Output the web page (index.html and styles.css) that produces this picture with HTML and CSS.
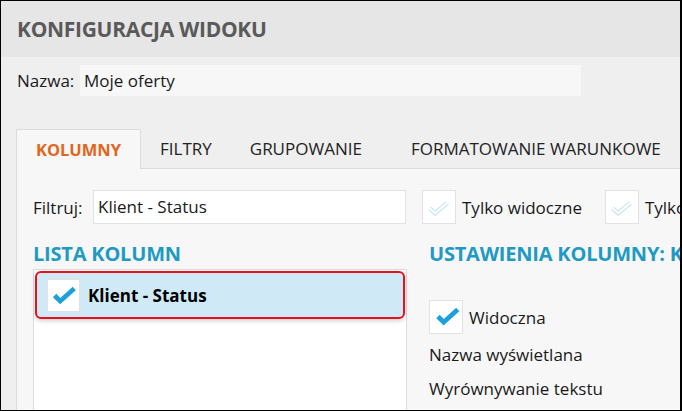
FILE: index.html
```html
<!DOCTYPE html>
<html lang="pl">
<head>
  <meta charset="UTF-8" />
  <title>Konfiguracja widoku</title>
  <link rel="stylesheet" href="styles.css">
</head>
<body>
  <div class="frame">
    <!-- Nagłówek okna -->
    <div class="header">
      <h1>KONFIGURACJA WIDOKU</h1>
    </div>

    <div class="name-row">
      <span class="label">Nazwa:</span>
      <div class="name-input">Moje oferty</div>
    </div>

    <!-- Zakładki -->
    <div class="tabs">
      <div class="tab active">KOLUMNY</div>
      <div class="tab">FILTRY</div>
      <div class="tab">GRUPOWANIE</div>
      <div class="tab">FORMATOWANIE WARUNKOWE</div>
    </div>

    <div class="panel">
      <div class="filter-row">
        <span class="label">Filtruj:</span>
        <div class="filter-input">Klient - Status</div>
        <div class="check light">
          <svg viewBox="0 0 34 34" width="33" height="33">
            <polyline points="7,18 13,23 26,12" fill="none" stroke="#bfe4f3" stroke-width="4.6" stroke-linejoin="miter"/>
            <polyline points="7,18 13,23 26,12" fill="none" stroke="#fff" stroke-width="2.4" stroke-linejoin="miter"/>
          </svg>
        </div>
        <span class="check-text">Tylko widoczne</span>
        <div class="check light second">
          <svg viewBox="0 0 34 34" width="33" height="33">
            <polyline points="7,18 13,23 26,12" fill="none" stroke="#bfe4f3" stroke-width="4.6" stroke-linejoin="miter"/>
            <polyline points="7,18 13,23 26,12" fill="none" stroke="#fff" stroke-width="2.4" stroke-linejoin="miter"/>
          </svg>
        </div>
        <span class="check-text">Tylko wybrane</span>
      </div>

      <div class="columns">
        <div class="col-list">
          <h2>LISTA KOLUMN</h2>
          <div class="list-box">
            <div class="list-item selected">
              <div class="check">
                <svg viewBox="0 0 33 33" width="33" height="33">
                  <polyline points="7,16.5 13,22.5 28,9" fill="none" stroke="#1ba0dc" stroke-width="5"/>
                </svg>
              </div>
              <span class="item-text">Klient - Status</span>
            </div>
          </div>
        </div>

        <div class="col-settings">
          <h2>USTAWIENIA KOLUMNY: KLIENT - STATUS</h2>
          <div class="setting-check">
            <div class="check">
              <svg viewBox="0 0 34 34" width="34" height="34">
                <polyline points="8.5,16.5 14.5,22.5 29.5,9" fill="none" stroke="#1ba0dc" stroke-width="5"/>
              </svg>
            </div>
            <span class="check-text">Widoczna</span>
          </div>
          <div class="setting-row">Nazwa wyświetlana</div>
          <div class="setting-row">Wyrównywanie tekstu</div>
        </div>
      </div>
    </div>
  </div>
</body>
</html>
```

FILE: styles.css
```css
html, body {
  margin: 0;
  padding: 0;
}
body {
  width: 682px;
  height: 411px;
  overflow: hidden;
  font-family: "Open Sans", "Noto Sans", sans-serif;
  color: #1a1a1a;
}
.frame {
  box-sizing: border-box;
  width: 682px;
  height: 411px;
  border: 1px solid #000;
  border-right-width: 2px;
  background: #efefef;
  overflow: hidden;
}
/* Nagłówek */
.header {
  height: 56px;
  background: #e6e6e6;
  display: flex;
  align-items: center;
  padding-left: 16px;
}
.header h1 {
  margin: 0;
  font-size: 21px;
  font-weight: 700;
  color: #5a5a5a;
  letter-spacing: -0.3px;
}
.label {
  font-size: 17px;
  flex: none;
}
.name-row {
  display: flex;
  align-items: center;
  margin-top: 8px;
  padding-left: 16px;
}
.name-row .label {
  width: 63px;
}
.name-input {
  box-sizing: border-box;
  width: 501px;
  height: 31px;
  background: #f7f7f7;
  padding-left: 4px;
  font-size: 17px;
  line-height: 31px;
}
/* Zakładki */
.tabs {
  display: flex;
  margin: 33px 0 0 15px;
  border-bottom: 1px solid #dcdcdc;
  height: 39px;
  white-space: nowrap;
}
.tab {
  flex: none;
  padding: 0 19px;
  font-size: 17px;
  line-height: 40px;
  color: #222;
}
.tab.active {
  box-sizing: border-box;
  width: 125px;
  height: 40px;
  padding: 0;
  text-align: center;
  background: #f7f7f7;
  border: 1px solid #dcdcdc;
  border-bottom: none;
  color: #e2661b;
  font-weight: 700;
  font-size: 16.5px;
}
.tab:nth-child(4) {
  padding-left: 30px;
}
/* Panel */
.panel {
  margin-left: 15px;
  border-left: 1px solid #dcdcdc;
  background: #f7f7f7;
  height: 260px;
  padding: 21px 0 0 16px;
}
.filter-row {
  display: flex;
  align-items: center;
  white-space: nowrap;
}
.filter-row > * {
  flex: none;
}
.filter-row .label {
  width: 60px;
}
.filter-input {
  box-sizing: border-box;
  width: 313px;
  height: 34px;
  background: #fff;
  border: 1px solid #e2e2e2;
  padding-left: 4px;
  font-size: 17px;
  line-height: 32px;
}
.check {
  box-sizing: border-box;
  width: 34px;
  height: 34px;
  background: #fff;
  border: 1px solid #e2e2e2;
  flex: none;
  display: flex;
  align-items: center;
  justify-content: center;
}
.filter-row .check {
  margin-left: 16px;
}
.filter-row .check.second {
  margin-left: 23px;
}
.check-text {
  font-size: 17px;
  margin-left: 6px;
}
.columns {
  display: flex;
  margin-top: 18px;
  white-space: nowrap;
}
h2 {
  margin: 0;
  font-size: 20px;
  font-weight: 700;
  color: #1e9ac4;
  line-height: 24px;
  letter-spacing: -0.2px;
}
.col-list {
  width: 374px;
  flex: none;
}
.list-box {
  box-sizing: border-box;
  margin-top: 3px;
  height: 150px;
  background: #fff;
  border: 1px solid #dcdcdc;
  padding: 1px;
}
.list-item {
  display: flex;
  align-items: center;
  box-sizing: border-box;
  height: 48px;
  padding-left: 10px;
}
.list-item.selected {
  background: #cfeaf6;
  border: 2px solid #e8101c;
  border-radius: 6px;
  box-shadow: 0 2px 4px rgba(0, 0, 0, 0.18);
}
.list-item .check {
  width: 33px;
  height: 33px;
}
.item-text {
  font-size: 17px;
  font-weight: 700;
  color: #000;
  margin-left: 8px;
}
.col-settings {
  margin-left: 22px;
}
.setting-check {
  display: flex;
  align-items: center;
  margin-top: 34px;
}
.setting-row {
  font-size: 17px;
  margin-top: 8px;
  line-height: 26px;
}
```
